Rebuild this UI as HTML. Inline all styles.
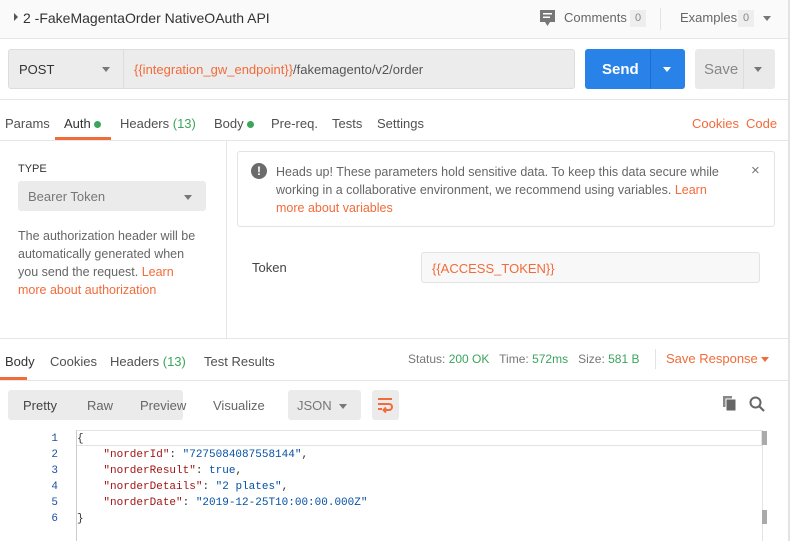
<!DOCTYPE html>
<html><head><meta charset="utf-8"><style>
*{margin:0;padding:0;box-sizing:border-box}
body{width:790px;height:541px;background:#fff;font-family:"Liberation Sans",sans-serif;font-size:12px;color:#505050;position:relative;overflow:hidden}
.a{position:absolute;white-space:nowrap}
.or{color:#f26b3a}.gr{color:#3ba55c}
.hl{position:absolute;background:#e6e6e6;height:1px}
.mono{font-family:"Liberation Mono",monospace;font-size:11px}
</style></head><body>
<div class="a" style="left:0;top:0;width:790px;height:38px;background:#fafafa"></div>
<div class="a" style="left:14px;top:13px;width:0;height:0;border-left:4px solid #555;border-top:4px solid transparent;border-bottom:4px solid transparent"></div>
<div class="a" style="left:23px;top:10px;font-size:14px;color:#333">2 -FakeMagentaOrder NativeOAuth API</div>
<svg class="a" style="left:540px;top:10px" width="16" height="17"><rect x="0" y="0" width="15" height="12" fill="#777"/><path d="M5 12h5l-2.5 4z" fill="#777"/><rect x="3" y="3" width="9" height="1.5" fill="#fff"/><rect x="3" y="6.5" width="7" height="1.5" fill="#fff"/></svg>
<div class="a" style="left:564px;top:10px;font-size:13px;color:#666">Comments</div>
<div class="a" style="left:630px;top:10px;width:16px;height:17px;background:#eee;color:#888;font-size:11px;text-align:center;line-height:17px">0</div>
<div class="a" style="left:660px;top:8px;width:1px;height:22px;background:#e3e3e3"></div>
<div class="a" style="left:680px;top:10px;font-size:13px;color:#666">Examples</div>
<div class="a" style="left:738px;top:10px;width:16px;height:17px;background:#eee;color:#888;font-size:11px;text-align:center;line-height:17px">0</div>
<div class="a" style="left:763px;top:16px;border-top:5px solid #777;border-left:4px solid transparent;border-right:4px solid transparent"></div>
<div class="hl" style="left:0;top:38px;width:790px"></div>

<div class="a" style="left:8px;top:49px;width:567px;height:40px;background:#ececec;border:1px solid #ddd;border-radius:3px"></div>
<div class="a" style="left:123px;top:50px;width:1px;height:38px;background:#ddd"></div>
<div class="a" style="left:19px;top:62px;font-size:13px;color:#333">POST</div>
<div class="a" style="left:102px;top:67px;border-top:5px solid #777;border-left:4px solid transparent;border-right:4px solid transparent"></div>
<div class="a" style="left:134px;top:62px;font-size:13px;color:#555"><span class="or">{{integration_gw_endpoint}}</span>/fakemagento/v2/order</div>
<div class="a" style="left:585px;top:49px;width:100px;height:40px;background:#2882e8;border-radius:3px"></div>
<div class="a" style="left:650px;top:49px;width:1px;height:40px;background:#1a6fcf"></div>
<div class="a" style="left:602px;top:61px;font-size:15px;font-weight:bold;color:#fff">Send</div>
<div class="a" style="left:663px;top:67px;border-top:5px solid #fff;border-left:4px solid transparent;border-right:4px solid transparent"></div>
<div class="a" style="left:695px;top:49px;width:80px;height:40px;background:#eaeaea;border-radius:3px"></div>
<div class="a" style="left:743px;top:49px;width:1px;height:40px;background:#ddd"></div>
<div class="a" style="left:704px;top:61px;font-size:15px;color:#888">Save</div>
<div class="a" style="left:754px;top:67px;border-top:5px solid #777;border-left:4px solid transparent;border-right:4px solid transparent"></div>
<div class="hl" style="left:0;top:99px;width:790px"></div>

<div class="a" style="left:5px;top:116px;font-size:13px">Params</div>
<div class="a" style="left:64px;top:116px;font-size:13px;color:#333">Auth <span style="display:inline-block;width:7px;height:7px;border-radius:50%;background:#3ba55c"></span></div>
<div class="a" style="left:55px;top:137px;width:56px;height:3px;background:#f26b3a"></div>
<div class="a" style="left:120px;top:116px;font-size:13px">Headers <span class="gr">(13)</span></div>
<div class="a" style="left:214px;top:116px;font-size:13px">Body <span style="display:inline-block;width:7px;height:7px;border-radius:50%;background:#3ba55c"></span></div>
<div class="a" style="left:271px;top:116px;font-size:13px">Pre-req.</div>
<div class="a" style="left:332px;top:116px;font-size:13px">Tests</div>
<div class="a" style="left:377px;top:116px;font-size:13px">Settings</div>
<div class="a or" style="left:692px;top:116px;font-size:13px">Cookies</div>
<div class="a or" style="left:746px;top:116px;font-size:13px">Code</div>
<div class="hl" style="left:0;top:140px;width:790px"></div>

<div class="a" style="left:226px;top:141px;width:1px;height:197px;background:#e6e6e6"></div>
<div class="a" style="left:18px;top:163px;font-size:11px;color:#333">TYPE</div>
<div class="a" style="left:18px;top:181px;width:188px;height:30px;background:#ebebeb;border-radius:3px"></div>
<div class="a" style="left:28px;top:189px;font-size:13px;color:#777">Bearer Token</div>
<div class="a" style="left:184px;top:195px;border-top:5px solid #777;border-left:4px solid transparent;border-right:4px solid transparent"></div>
<div class="a" style="left:18px;top:227px;font-size:12.5px;line-height:18px;color:#666;white-space:normal;width:185px">The authorization header will be automatically generated when you send the request. <span class="or">Learn more about authorization</span></div>

<div class="a" style="left:237px;top:151px;width:538px;height:76px;border:1px solid #e3e3e3;border-radius:3px"></div>
<div class="a" style="left:251px;top:163px;width:16px;height:16px;border-radius:50%;background:#6b6b6b;color:#fff;font-weight:bold;font-size:12px;text-align:center;line-height:16px">!</div>
<div class="a" style="left:276px;top:163px;font-size:12.5px;line-height:18px;color:#666;white-space:normal;width:450px">Heads up! These parameters hold sensitive data. To keep this data secure while working in a collaborative environment, we recommend using variables. <span class="or">Learn more about variables</span></div>
<div class="a" style="left:751px;top:162px;font-size:15px;color:#777">×</div>
<div class="a" style="left:252px;top:260px;font-size:13px;color:#444">Token</div>
<div class="a" style="left:421px;top:252px;width:339px;height:31px;background:#f8f8f8;border:1px solid #e3e3e3;border-radius:3px"></div>
<div class="a or" style="left:432px;top:261px;font-size:13px">{{ACCESS_TOKEN}}</div>
<div class="hl" style="left:0;top:338px;width:790px"></div>

<div class="a" style="left:5px;top:354px;font-size:13px;color:#333">Body</div>
<div class="a" style="left:0;top:377px;width:27px;height:3px;background:#f26b3a"></div>
<div class="a" style="left:50px;top:354px;font-size:13px">Cookies</div>
<div class="a" style="left:110px;top:354px;font-size:13px">Headers <span class="gr">(13)</span></div>
<div class="a" style="left:204px;top:354px;font-size:13px">Test Results</div>
<div class="a" style="left:408px;top:352px;font-size:12px;color:#777">Status: <span class="gr">200 OK</span>&nbsp;&nbsp; Time: <span class="gr">572ms</span>&nbsp;&nbsp; Size: <span class="gr">581 B</span></div>
<div class="a" style="left:655px;top:349px;width:1px;height:20px;background:#e3e3e3"></div>
<div class="a or" style="left:666px;top:351px;font-size:13px">Save Response</div>
<div class="a" style="left:761px;top:357px;border-top:5px solid #f26b3a;border-left:4px solid transparent;border-right:4px solid transparent"></div>
<div class="hl" style="left:0;top:380px;width:790px"></div>

<div class="a" style="left:8px;top:390px;width:175px;height:30px;background:#ebebeb;border-radius:3px"></div>
<div class="a" style="left:23px;top:398px;font-size:13px;color:#444">Pretty</div>
<div class="a" style="left:87px;top:398px;font-size:13px;color:#666">Raw</div>
<div class="a" style="left:140px;top:398px;font-size:13px;color:#666">Preview</div>
<div class="a" style="left:213px;top:398px;font-size:13px;color:#666">Visualize</div>
<div class="a" style="left:288px;top:390px;width:73px;height:30px;background:#ebebeb;border-radius:3px"></div>
<div class="a" style="left:297px;top:398px;font-size:13px;color:#777">JSON</div>
<div class="a" style="left:339px;top:404px;border-top:5px solid #777;border-left:4px solid transparent;border-right:4px solid transparent"></div>
<div class="a" style="left:372px;top:390px;width:27px;height:30px;background:#ebebeb;border-radius:3px"></div>
<svg class="a" style="left:377px;top:396px" width="17" height="18"><path d="M1 3h14M1 8h11a3 3 0 0 1 0 6h-5M1 13h4M9 11.5l-2.5 2.5 2.5 2.5" stroke="#f26b3a" stroke-width="2" fill="none"/></svg>
<svg class="a" style="left:723px;top:396px" width="14" height="15"><rect x="0" y="0" width="9" height="11" fill="#888"/><rect x="3" y="3" width="10" height="12" fill="#666" stroke="#fff" stroke-width="1"/></svg>
<svg class="a" style="left:749px;top:396px" width="16" height="16"><circle cx="6.5" cy="6.5" r="5" stroke="#666" stroke-width="2" fill="none"/><path d="M10 10l5 5" stroke="#666" stroke-width="2.2"/></svg>

<div class="a" style="left:76px;top:430px;width:686px;height:111px;border-left:1px solid #ccc"></div>
<div class="a" style="left:77px;top:430px;width:685px;height:16px;border:1px solid #e3e3e3;border-left:none"></div>
<div class="a" style="left:762px;top:430px;width:6px;height:111px;background:#fff;border-left:1px solid #e3e3e3"></div>
<div class="a" style="left:762px;top:431px;width:5px;height:14px;background:#aaa"></div>
<div class="a" style="left:762px;top:510px;width:5px;height:14px;background:#aaa"></div>
<div class="a mono" style="left:44px;top:431px;line-height:16px;color:#2050a0;text-align:right;width:14px">1<br>2<br>3<br>4<br>5<br>6</div>
<div class="a mono" style="left:77px;top:431px;line-height:16px;color:#333">{<br>&nbsp;&nbsp;&nbsp;&nbsp;<span style="color:#a31515">"norderId"</span>: <span style="color:#0451a5">"7275084087558144"</span>,<br>&nbsp;&nbsp;&nbsp;&nbsp;<span style="color:#a31515">"norderResult"</span>: <span style="color:#0451a5">true</span>,<br>&nbsp;&nbsp;&nbsp;&nbsp;<span style="color:#a31515">"norderDetails"</span>: <span style="color:#0451a5">"2 plates"</span>,<br>&nbsp;&nbsp;&nbsp;&nbsp;<span style="color:#a31515">"norderDate"</span>: <span style="color:#0451a5">"2019-12-25T10:00:00.000Z"</span><br>}</div>
<div class="a" style="left:788px;top:0;width:2px;height:541px;background:#e3e3e3"></div>
</body></html>
